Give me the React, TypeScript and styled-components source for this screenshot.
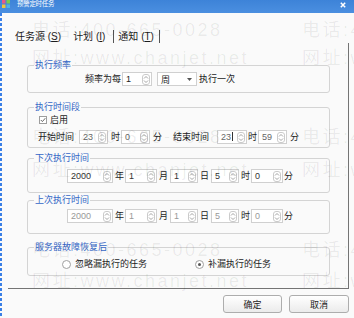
import { FC, ReactNode } from "react";
import styled, { createGlobalStyle } from "styled-components";

const GlobalStyle = createGlobalStyle`
  html, body {
    margin: 0;
    padding: 0;
    background: #fafafa;
  }
  body {
    font-family: "Liberation Sans", "Noto Sans CJK SC", sans-serif;
  }
`;

const Window = styled.div`
  position: relative;
  width: 354px;
  height: 318px;
  overflow: hidden;
  background: #fafafa;
  color: #1c1c1c;
  font-size: 9px;
`;

const TitleBar = styled.div`
  height: 13px;
  display: flex;
  align-items: flex-start;
  padding-left: 2px;
  background: linear-gradient(#3d83d8, #4b8fe0);
  color: #fff;
`;

const TitleText = styled.span`
  margin-left: 7px;
  font-size: 6.5px;
  line-height: 8px;
  letter-spacing: -0.3px;
`;

const CloseButton = styled.span`
  margin-left: auto;
  margin-right: 8px;
  margin-top: 2px;
  display: flex;
`;

const Body = styled.div`
  height: 305px;
  padding-left: 2px;
  display: flex;
  flex-direction: column;
  background-image: repeating-linear-gradient(to bottom, #3a7fe6 0 3px, transparent 3px 5px);
  background-size: 2px 100%;
  background-repeat: no-repeat;
`;

const TabStrip = styled.div`
  height: 30px;
  display: flex;
  align-items: flex-end;
  padding-left: 13px;
  box-sizing: border-box;
`;

const Tab = styled.span<{ $mr: number }>`
  font-size: 10px;
  line-height: 13px;
  margin-right: ${(p) => p.$mr}px;
  white-space: pre;
`;

const TabDivider = styled.span<{ $mr: number }>`
  width: 1px;
  height: 13px;
  background: #555;
  margin-right: ${(p) => p.$mr}px;
`;

const TabPage = styled.div`
  box-sizing: border-box;
  width: 341px;
  height: 246px;
  margin-left: 6px;
  padding: 22px 18px 0 19px;
  border-right: 1px solid #747474;
  border-bottom: 1px solid #747474;
  display: flex;
  flex-direction: column;
`;

const Group = styled.div<{ $h: number; $mt: number; $pt: number; $pl: number }>`
  position: relative;
  box-sizing: border-box;
  height: ${(p) => p.$h}px;
  margin-top: ${(p) => p.$mt}px;
  padding: ${(p) => p.$pt}px 0 0 ${(p) => p.$pl}px;
  border: 1px solid #d4d4d4;
  border-radius: 3px;
  display: flex;
  flex-direction: column;
  gap: 4px;
`;

const Legend = styled.span`
  position: absolute;
  top: -6px;
  left: 6px;
  padding: 0 1px;
  background: #fafafa;
  color: #3567c6;
  font-size: 9px;
  line-height: 11px;
`;

const Row = styled.div<{ $h?: number }>`
  display: flex;
  align-items: center;
  height: ${(p) => p.$h ?? 14}px;
  white-space: nowrap;
`;

const Label = styled.span<{ $ml?: number; $mr?: number }>`
  margin-left: ${(p) => p.$ml ?? 0}px;
  margin-right: ${(p) => p.$mr ?? 0}px;
  line-height: 12px;
`;

const SpinBox = styled.div<{ $w: number; $ml?: number }>`
  box-sizing: border-box;
  width: ${(p) => p.$w}px;
  height: 14px;
  margin-left: ${(p) => p.$ml ?? 0}px;
  display: flex;
  align-items: center;
  border: 1px solid #d0d0d0;
  background: #fff;
`;

const SpinValue = styled.span<{ $tone: string }>`
  flex: 1;
  padding-left: 3px;
  color: ${(p) => p.$tone};
  line-height: 12px;
`;

const Caret = styled.span`
  display: inline-block;
  width: 1px;
  height: 9px;
  margin-left: 1px;
  vertical-align: -1px;
  background: #333;
`;

const SpinButton = styled.span`
  box-sizing: border-box;
  width: 8px;
  height: 11px;
  margin-right: 1px;
  border: 1px solid #cbcbcb;
  border-radius: 3px;
  display: flex;
  align-items: center;
  justify-content: center;
`;

const Select = styled.div<{ $w: number; $ml: number }>`
  box-sizing: border-box;
  width: ${(p) => p.$w}px;
  height: 14px;
  margin-left: ${(p) => p.$ml}px;
  padding: 0 4px 0 3px;
  display: flex;
  align-items: center;
  justify-content: space-between;
  border: 1px solid #d0d0d0;
  background: #fff;
`;

const CheckBox = styled.span`
  box-sizing: border-box;
  width: 8px;
  height: 8px;
  margin-right: 3px;
  border: 1px solid #9d9d9d;
  background: #fff;
  display: flex;
  align-items: center;
  justify-content: center;
`;

const Radio = styled.span<{ $ml: number }>`
  box-sizing: border-box;
  width: 9px;
  height: 9px;
  margin-left: ${(p) => p.$ml}px;
  margin-right: 4px;
  border: 1px solid #a0a0a0;
  border-radius: 50%;
  background: #fff;
  display: flex;
  align-items: center;
  justify-content: center;
`;

const RadioDot = styled.span`
  width: 3px;
  height: 3px;
  border-radius: 50%;
  background: #555;
`;

const ButtonBar = styled.div`
  display: flex;
  justify-content: flex-end;
  gap: 7px;
  padding: 6px 5px 0 0;
`;

const Button = styled.button<{ $w: number }>`
  box-sizing: border-box;
  width: ${(p) => p.$w}px;
  height: 18px;
  padding: 0;
  border: 1px solid #adadad;
  border-radius: 3px;
  background: linear-gradient(#ffffff, #ebebeb);
  color: #222;
  font-family: inherit;
  font-size: 9px;
`;

const Watermark = styled.div`
  position: absolute;
  inset: 0;
  pointer-events: none;
`;

const Mark = styled.span`
  position: absolute;
  font-size: 18px;
  line-height: 18px;
  letter-spacing: 2.5px;
  color: rgba(0, 0, 0, 0.07);
  white-space: nowrap;
`;

const Chevrons: FC = () => (
  <svg width="6" height="9" viewBox="0 0 6 9">
    <path d="M1 3.5 L3 1.5 L5 3.5 M1 5.5 L3 7.5 L5 5.5" fill="none" stroke="#9a9a9a" strokeWidth="0.9" />
  </svg>
);

const Spin: FC<{ w: number; ml?: number; tone?: string; children: ReactNode }> = ({ w, ml, tone = "#222", children }) => (
  <SpinBox $w={w} $ml={ml}>
    <SpinValue $tone={tone}>{children}</SpinValue>
    <SpinButton>
      <Chevrons />
    </SpinButton>
  </SpinBox>
);

const DateRow: FC<{ tone: string }> = ({ tone }) => (
  <Row>
    <Spin w={46} tone={tone}>2000</Spin>
    <Label $ml={2}>年</Label>
    <Spin w={32} ml={1} tone={tone}>1</Spin>
    <Label $ml={2}>月</Label>
    <Spin w={28} ml={2} tone={tone}>1</Spin>
    <Label $ml={2}>日</Label>
    <Spin w={28} ml={2} tone={tone}>5</Spin>
    <Label $ml={2}>时</Label>
    <Spin w={32} ml={1} tone={tone}>0</Spin>
    <Label $ml={1}>分</Label>
  </Row>
);

const marks = [
  { text: "电话:400-665-0028", top: 21 },
  { text: "网址:www.chanjet.net", top: 49 },
  { text: "电话:400-665-0028", top: 128 },
  { text: "网址:www.chanjet.net", top: 161 },
  { text: "电话:400-665-0028", top: 241 },
  { text: "网址:www.chanjet.net", top: 272 },
];

export default function App() {
  return (
    <Window>
      <GlobalStyle />
      <TitleBar>
        <svg width="8" height="8" viewBox="0 0 8 8">
          <rect x="0" y="0" width="3.5" height="3.5" fill="#e65a8a" />
          <rect x="4.5" y="0" width="3.5" height="3.5" fill="#7ccb4e" />
          <rect x="0" y="4.5" width="3.5" height="3.5" fill="#f0c43c" />
          <rect x="4.5" y="4.5" width="3.5" height="3.5" fill="#4fb3e8" />
        </svg>
        <TitleText>预警定时任务</TitleText>
        <CloseButton>
          <svg width="6" height="6" viewBox="0 0 6 6">
            <path d="M0.8 0.8 L5.2 5.2 M5.2 0.8 L0.8 5.2" stroke="#fff" strokeWidth="1.5" />
          </svg>
        </CloseButton>
      </TitleBar>
      <Body>
        <TabStrip>
          <Tab $mr={12}>
            任务源 (<u>S</u>)
          </Tab>
          <Tab $mr={8}>
            计划 (<u>I</u>)
          </Tab>
          <TabDivider $mr={4} />
          <Tab $mr={5}>
            通知 (<u>T</u>)
          </Tab>
          <TabDivider $mr={0} />
        </TabStrip>
        <TabPage>
          <Group $h={28} $mt={0} $pt={6} $pl={57}>
            <Legend>执行频率</Legend>
            <Row>
              <Label $mr={1}>频率为每</Label>
              <Spin w={30}>1</Spin>
              <Select $w={40} $ml={5}>
                <span>周</span>
                <svg width="5" height="3" viewBox="0 0 5 3">
                  <path d="M0 0 L5 0 L2.5 3 Z" fill="#555" />
                </svg>
              </Select>
              <Label $ml={2}>执行一次</Label>
            </Row>
          </Group>
          <Group $h={41} $mt={14} $pt={6} $pl={11}>
            <Legend>执行时间段</Legend>
            <Row $h={12}>
              <CheckBox>
                <svg width="6" height="6" viewBox="0 0 6 6">
                  <path d="M0.8 3 L2.4 4.6 L5.3 1.2" fill="none" stroke="#666" strokeWidth="1" />
                </svg>
              </CheckBox>
              <Label>启用</Label>
            </Row>
            <Row style={{ marginLeft: -1 }}>
              <Label>开始时间</Label>
              <Spin w={29} ml={5} tone="#666">23</Spin>
              <Label $ml={3}>时</Label>
              <Spin w={29} ml={1} tone="#666">0</Spin>
              <Label $ml={3}>分</Label>
              <Label $ml={11}>结束时间</Label>
              <Spin w={30} ml={8} tone="#666">
                23<Caret />
              </Spin>
              <Label $ml={1}>时</Label>
              <Spin w={29} ml={1} tone="#666">59</Spin>
              <Label $ml={3}>分</Label>
            </Row>
          </Group>
          <Group $h={35} $mt={10} $pt={10} $pl={39}>
            <Legend>下次执行时间</Legend>
            <DateRow tone="#333" />
          </Group>
          <Group $h={34} $mt={7} $pt={8} $pl={39}>
            <Legend>上次执行时间</Legend>
            <DateRow tone="#999" />
          </Group>
          <Group $h={29} $mt={13} $pt={10} $pl={34}>
            <Legend>服务器故障恢复后</Legend>
            <Row $h={12}>
              <Radio $ml={0} />
              <Label>忽略漏执行的任务</Label>
              <Radio $ml={48}>
                <RadioDot />
              </Radio>
              <Label>补漏执行的任务</Label>
            </Row>
          </Group>
        </TabPage>
        <ButtonBar>
          <Button $w={59}>确定</Button>
          <Button $w={60}>取消</Button>
        </ButtonBar>
      </Body>
      <Watermark>
        {marks.map((m, i) =>
          [32, 302].map((left) => (
            <Mark key={`${i}-${left}`} style={{ top: m.top, left }}>
              {m.text}
            </Mark>
          ))
        )}
      </Watermark>
    </Window>
  );
}
